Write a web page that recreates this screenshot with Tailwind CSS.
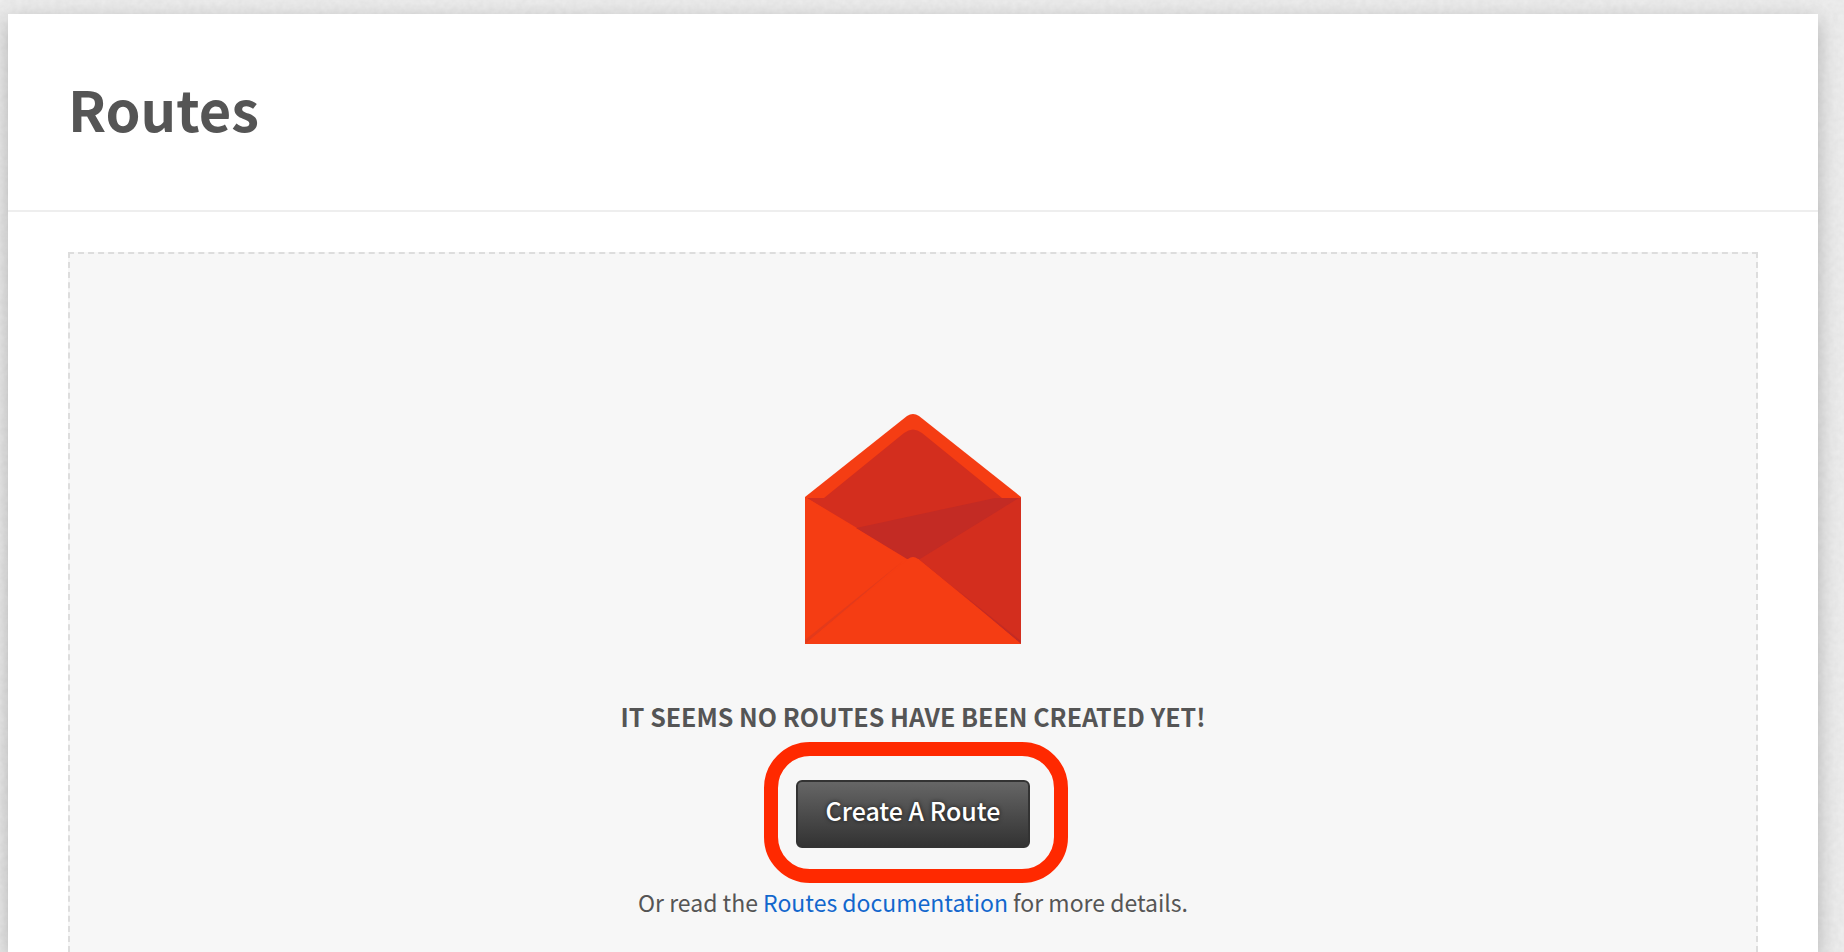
<!DOCTYPE html>
<html lang="en">
<head>
<meta charset="utf-8">
<title>Routes</title>
<meta name="viewport" content="width=device-width, initial-scale=1">
<script src="https://cdn.jsdelivr.net/npm/@tailwindcss/browser@4"></script>
</head>
<body class="relative flex h-screen flex-col overflow-hidden bg-[#e9e9e9] pt-[14px] pr-[26px] pl-2 font-['Noto_Sans_CJK_SC','Source_Sans_Pro',sans-serif] text-[#555]">
  <!-- paper grain -->
  <svg class="absolute inset-0 h-full w-full" aria-hidden="true">
    <filter id="grain" x="0" y="0" width="100%" height="100%" color-interpolation-filters="sRGB">
      <feTurbulence type="fractalNoise" baseFrequency="0.18" numOctaves="2" seed="4"/>
      <feColorMatrix type="matrix" values="0.04 0 0 0 0.898  0.04 0 0 0 0.898  0.04 0 0 0 0.898  0 0 0 0 1"/>
    </filter>
    <rect width="100%" height="100%" filter="url(#grain)"/>
  </svg>
  <div class="relative flex flex-1 flex-col bg-white shadow-[0_6px_20px_rgba(0,0,0,0.25)]">
    <header class="flex h-[198px] items-center border-b-2 border-[#eee] px-[60px] pb-2">
      <h1 class="text-[56px] leading-[72px] font-bold">Routes</h1>
    </header>
    <main class="flex flex-1 flex-col px-[60px] pt-10">
      <section class="flex flex-1 flex-col items-center border-2 border-b-0 border-dashed border-[#ddd] bg-[#f7f7f7] pt-40 text-[25px] leading-9">
        <svg class="h-[230px] w-[216px]" viewBox="0 0 216 230" role="img" aria-label="Open envelope">
          <path d="M0 83 102 2Q108-2 114 2L216 83V230H0Z" fill="#f53d13"/>
          <path d="M2 84H19L99 19Q108 12 117 19L197 84H216V229L112 144H102Z" fill="#d32e1e"/>
          <path d="M51 114 190 84H214L115 145H102Z" fill="#c32b24"/>
          <path d="M0 83 102 146 0 229Z" fill="#f53d13"/>
          <path d="M0 230V226L98 147Z" fill="#e33a1b"/>
          <path d="M216 230V227L150 174Z" fill="#c32b24"/>
          <path d="M0 230 103 145Q108 141 113 145L216 230Z" fill="#f53d13"/>
        </svg>
        <h2 class="mt-[54px] font-bold">IT SEEMS NO ROUTES HAVE BEEN CREATED YET!</h2>
        <div class="relative mt-[46px]">
          <button type="button" class="block h-[68px] rounded-md border-2 border-[#333] bg-linear-to-b from-[#666] to-[#333] px-7 pb-2 font-medium text-white [text-shadow:0_0_4px_rgba(0,0,0,0.7)]">Create A Route</button>
          <div class="pointer-events-none absolute -top-[38px] -right-[38px] -bottom-[35px] -left-8 rounded-[46px] border-[14px] border-[#ff2900]"></div>
        </div>
        <p class="mt-9 text-[23px]">Or read the <a href="#" class="text-[#1267cd]">Routes documentation</a> for more details.</p>
      </section>
    </main>
  </div>
</body>
</html>
